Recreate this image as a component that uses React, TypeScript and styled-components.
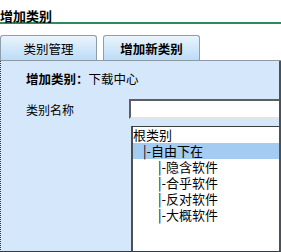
import React from 'react';
import styled, { createGlobalStyle } from 'styled-components';

const GlobalStyle = createGlobalStyle`
  html, body {
    margin: 0;
    padding: 0;
    background: #ffffff;
  }
  body {
    font-family: "Noto Sans CJK SC", "DejaVu Sans", sans-serif;
    font-size: 12px;
    color: #000;
  }
`;

const Page = styled.div`
  width: 281px;
  height: 252px;
  display: flex;
  flex-direction: column;
  overflow: hidden;
`;

const Header = styled.div`
  height: 24px;
  box-sizing: border-box;
  padding-top: 7px;
  line-height: 18px;
  font-size: 13px;
  font-weight: bold;
  border-bottom: 2px solid #2f8a5c;
`;

const TabBar = styled.div`
  height: 36px;
  display: flex;
  align-items: flex-end;
  gap: 6px;
  border-bottom: 1px solid #8d9aa6;
`;

const Tab = styled.div<{ $active?: boolean }>`
  width: 97px;
  height: 25px;
  box-sizing: border-box;
  display: flex;
  align-items: center;
  justify-content: center;
  border: 1px solid #8e9eab;
  border-bottom: none;
  border-radius: 3px 3px 0 0;
  background: linear-gradient(#e9f4fe, #bcdcf7);
  font-size: 12.5px;
  font-weight: ${(p) => (p.$active ? 'bold' : 'normal')};
`;

const Panel = styled.div`
  flex: 1;
  background: #d5e8fb;
  border-left: 1px dotted #2c3a48;
  border-right: 2px solid #4a5158;
  border-bottom: 1px solid #333c44;
  padding: 9px 0 0 25px;
  overflow: hidden;
`;

const Caption = styled.div`
  line-height: 17px;
  font-size: 12.5px;
`;

const CaptionKey = styled.span`
  font-weight: bold;
`;

const FieldRow = styled.div`
  display: flex;
  margin-top: 12px;
  align-items: center;
`;

const Label = styled.div`
  width: 103px;
  flex-shrink: 0;
  font-size: 12px;
`;

const TextInput = styled.input`
  width: 200px;
  height: 20px;
  box-sizing: border-box;
  flex-shrink: 0;
  background: #fff;
  border: 2px solid;
  border-color: #5e5e5e #e4e4e4 #e4e4e4 #5e5e5e;
  outline: none;
`;

const ListBox = styled.div`
  margin: 7px 0 0 105px;
  width: 200px;
  height: 140px;
  background: #fff;
  border: 1px solid #4e4e4e;
  border-left-width: 2px;
  border-top-color: #3e3e3e;
`;

const ListItem = styled.div<{ $level: number; $selected?: boolean }>`
  height: 16px;
  line-height: 16px;
  font-size: 13px;
  padding-left: ${(p) => (p.$level === 0 ? 0 : p.$level === 1 ? 10 : 25)}px;
  background: ${(p) => (p.$selected ? '#a2ccf2' : 'transparent')};
  white-space: nowrap;
`;

const categories = [
  { name: '根类别', level: 0 },
  { name: '|-自由下在', level: 1, selected: true },
  { name: '|-隐含软件', level: 2 },
  { name: '|-合乎软件', level: 2 },
  { name: '|-反对软件', level: 2 },
  { name: '|-大概软件', level: 2 },
];

export default function App() {
  return (
    <Page>
      <GlobalStyle />
      <Header>增加类别</Header>
      <TabBar>
        <Tab>类别管理</Tab>
        <Tab $active>增加新类别</Tab>
      </TabBar>
      <Panel>
        <Caption>
          <CaptionKey>增加类别：</CaptionKey>下载中心
        </Caption>
        <FieldRow>
          <Label>类别名称</Label>
          <TextInput />
        </FieldRow>
        <ListBox>
          {categories.map((c) => (
            <ListItem key={c.name} $level={c.level} $selected={c.selected}>
              {c.name}
            </ListItem>
          ))}
        </ListBox>
      </Panel>
    </Page>
  );
}
